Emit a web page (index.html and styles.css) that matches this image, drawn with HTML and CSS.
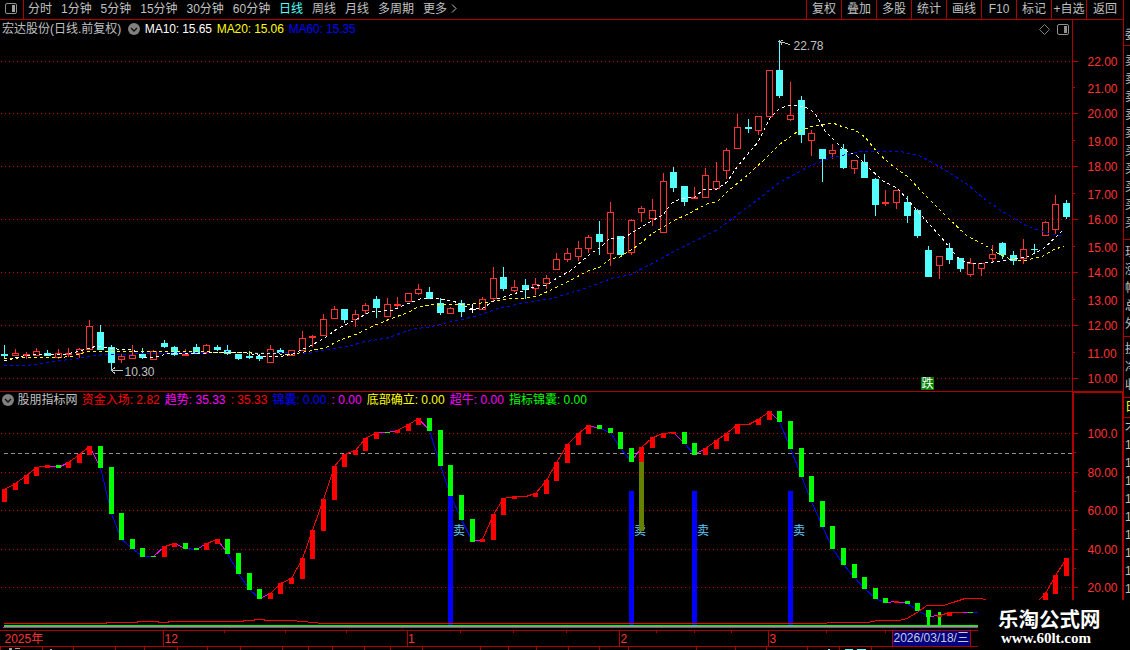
FILE: index.html
```html
<!DOCTYPE html>
<html lang="zh-CN">
  <head>
    <meta charset="UTF-8" />
    <meta name="viewport" content="width=device-width, initial-scale=1.0" />
    <title>宏达股份 日线</title>
    <link rel="stylesheet" href="styles.css">
  </head>
  <body>
    <div class="terminal">
      <header class="toolbar">
        <div class="toggle">
          <svg width="12" height="12" viewBox="0 0 12 12"><rect x="0.5" y="0.5" width="11" height="10" rx="1.5" fill="none" stroke="#909090" /><rect x="7" y="2" width="3" height="7" fill="#a0a0a0" /></svg>
        </div>
        <nav class="periods">
          <span>分时</span><span>1分钟</span><span>5分钟</span><span>15分钟</span><span>30分钟</span><span>60分钟</span><span class="active">日线</span><span>周线</span><span>月线</span><span>多周期</span><span>更多</span>
          <svg class="more" width="6" height="10" viewBox="0 0 6 10"><path d="M1 0.5L5 4.5L1 8.5" fill="none" stroke="#c0c0c0" /></svg>
        </nav>
        <nav class="tools">
          <span>复权</span><span>叠加</span><span>多股</span><span>统计</span><span>画线</span><span>F10</span><span>标记</span><span>+自选</span><span class="back">返回</span>
        </nav>
      </header>

      <section class="panel price">
        <svg id="price" class="chart" width="1124" height="371" viewBox="0 20 1124 371"></svg>
        <div class="caption">
          <span class="name">宏达股份(日线.前复权)</span>
          <svg class="drop" width="12" height="12" viewBox="0 0 12 12"><circle cx="6" cy="6" r="6" fill="#808080" /><path d="M3 5L6 8L9 5" fill="none" stroke="#111" stroke-width="1.4" /></svg>
          <span class="ma white">MA10: 15.65</span>
          <span class="ma yellow">MA20: 15.06</span>
          <span class="ma blue">MA60: 15.35</span>
          <div class="corner">
            <svg width="11" height="11" viewBox="0 0 11 11"><path d="M5.5 0.5L10.5 5.5L5.5 10.5L0.5 5.5Z" fill="none" stroke="#808080" /></svg>
            <svg width="12" height="11" viewBox="0 0 12 11"><rect x="0.5" y="0.5" width="11" height="10" rx="1.5" fill="none" stroke="#909090" /><rect x="7" y="2" width="3" height="7" fill="#909090" /></svg>
          </div>
        </div>
      </section>

      <section class="panel indicator">
        <svg id="indicator" class="chart" width="1124" height="238" viewBox="0 392 1124 238"></svg>
        <div class="caption">
          <svg class="drop" width="12" height="12" viewBox="0 0 12 12"><circle cx="6" cy="6" r="6" fill="#808080" /><path d="M3 5L6 8L9 5" fill="none" stroke="#111" stroke-width="1.4" /></svg>
          <span class="name">股朋指标网</span>
          <span class="red">资金入场: 2.82</span>
          <span class="magenta">趋势: 35.33</span>
          <span class="red">: 35.33</span>
          <span class="blue">锦囊: 0.00</span>
          <span class="magenta">: 0.00</span>
          <span class="yellow">底部确立: 0.00</span>
          <span class="magenta">超牛: 0.00</span>
          <span class="green">指标锦囊: 0.00</span>
        </div>
      </section>

      <svg id="timeline" class="chart" width="1124" height="20" viewBox="0 630 1124 20"></svg>
    </div>

    <aside class="side">
      <div class="cell head">委</div>
      <div class="cell quotes">卖卖卖卖卖买买买买买</div>
      <div class="cell quotes2">现涨幅总外</div>
      <div class="cell quotes3">换净收</div>
      <div class="cell tab yellow">日</div>
      <div class="cell ticks">才111111111</div>
    </aside>

    <div class="logo">
      <strong>乐淘公式网</strong>
      <b>www.60lt.com</b>
    </div>

    <script src="chart.js"></script>
  </body>
</html>
```
FILE: styles.css
```css
body {
  margin: 0;
  width: 1130px;
  height: 650px;
  overflow: hidden;
  display: flex;
  position: relative;
  background-color: #000;
  color: #c0c0c0;
  font-family: "Liberation Sans", "Noto Sans CJK SC", sans-serif;
  font-size: 12px;
  line-height: 18px;
}

svg {
  display: block;
  flex: none;
}

.terminal {
  width: 1124px;
  flex: none;
}

/* Top toolbar */
.toolbar {
  display: flex;
  box-sizing: border-box;
  height: 20px;
  border-right: 1px solid #b00000;
  border-bottom: 1px solid #b00000;
  white-space: nowrap;
}

.toggle {
  width: 18px;
  padding-left: 5px;
  padding-top: 3px;
  border-right: 1px solid #b00000;
}

.periods {
  display: flex;
  flex: 1;
  gap: 8.95px;
  padding-left: 4px;
}

.periods .active {
  color: #54ffff;
}

.more {
  margin: 4px 0 0 -5px;
}

.tools {
  display: flex;
}

.tools span {
  width: 34px;
  border-left: 1px solid #b00000;
  text-align: center;
}

.tools .back {
  width: 36px;
}

/* Panels */
.panel {
  display: grid;
}

.panel > * {
  grid-area: 1 / 1;
}

.price {
  height: 371px;
  border-bottom: 1px solid #b00000;
}

.indicator {
  height: 238px;
}

.caption {
  display: flex;
  align-items: center;
  align-self: start;
  gap: 5px;
  height: 18px;
  padding-left: 2px;
  white-space: nowrap;
}

.price .name {
  margin-right: 1.5px;
}

.ma {
  letter-spacing: -0.1px;
}

.indicator .caption {
  gap: 5.1px;
  height: 16px;
}

.indicator .name {
  margin: 0 -1px 0 -1.5px;
}

.corner {
  display: flex;
  gap: 7px;
  margin-left: auto;
  padding-right: 55px;
}

.white { color: #fff; }
.yellow { color: #ff0; }
.blue { color: #00f; }
.red { color: #f00; }
.magenta { color: #f0f; }
.green { color: #0f0; }

.chart text {
  font-size: 12px;
}

/* Clipped quote column */
.side {
  width: 6px;
  overflow: hidden;
}

.cell {
  box-sizing: border-box;
  width: 13px;
  padding-left: 1px;
  overflow: hidden;
  word-break: break-all;
  border-bottom: 1px solid #b00000;
}

.head {
  height: 46px;
  padding-top: 26px;
}

.quotes {
  height: 194px;
  padding-top: 6px;
}

.quotes2 {
  height: 97px;
  padding-top: 3px;
}

.quotes3 {
  height: 61px;
  padding-top: 3px;
}

.tab {
  height: 20px;
}

.ticks {
  height: 232px;
  border-bottom: none;
}

/* Site logo over the corner */
.logo {
  position: absolute;
  right: 0;
  bottom: 0;
  width: 132px;
  height: 45px;
  padding: 5px 0 0 20px;
  background-color: #000;
  color: #fff;
}

.logo strong {
  display: block;
  font: bold 20.5px/26px "Noto Sans CJK SC", sans-serif;
}

.logo b {
  display: block;
  padding-left: 3px;
  font: bold 15px/15px "Liberation Serif", serif;
}
```
FILE: chart.js
```js
const RED = "#ff3232";
const CYAN = "#54ffff";
const LINE = "#b00000";

// high, body top, body bottom, low, direction
const candles = [
  [345,354,356,358,"d"],[349,353,356,356,"u"],[352,354,356,359,"u"],[348,351,356,356,"u"],[350,353,356,356,"d"],
  [349,353,358,359,"u"],[348,353,355,357,"u"],[348,349,354,358,"u"],[320,326,350,350,"u"],[325,332,350,350,"d"],
  [345,347,363,371,"d"],[354,356,360,363,"u"],[345,355,359,359,"u"],[348,354,358,359,"d"],[350,351,360,360,"u"],
  [340,343,347,348,"d"],[346,347,355,356,"d"],[349,354,356,356,"u"],[344,347,354,354,"d"],[344,345,353,354,"u"],
  [345,347,350,351,"d"],[345,350,354,355,"d"],[354,354,359,360,"d"],[351,356,358,359,"d"],[354,356,359,361,"d"],
  [345,349,363,363,"u"],[348,350,353,353,"d"],[350,350,356,356,"u"],[331,338,351,351,"u"],[335,336,338,347,"u"],
  [314,319,336,336,"u"],[306,309,319,319,"u"],[309,309,320,323,"d"],[310,314,320,327,"u"],[303,305,311,314,"u"],
  [296,299,308,318,"d"],[298,304,317,317,"u"],[297,304,306,309,"u"],[293,293,302,302,"u"],[284,289,294,295,"u"],
  [287,292,299,299,"d"],[298,303,313,315,"d"],[307,308,314,314,"u"],[300,303,312,317,"d"],[304,309,310,313,"w"],
  [297,299,310,310,"u"],[267,278,299,302,"u"],[267,277,289,291,"d"],[280,287,291,292,"u"],[279,285,290,299,"d"],
  [278,284,289,295,"u"],[275,278,284,289,"u"],[253,259,270,270,"u"],[248,253,260,262,"u"],[241,248,257,261,"u"],
  [235,237,249,253,"u"],[221,234,242,255,"d"],[202,212,254,266,"u"],[236,236,255,255,"d"],[219,220,253,255,"u"],
  [206,208,213,222,"u"],[199,210,219,226,"u"],[173,181,233,233,"u"],[167,172,188,192,"d"],[186,186,202,206,"d"],
  [187,197,199,199,"u"],[168,175,198,198,"u"],[162,181,189,189,"u"],[148,150,171,179,"u"],[114,127,149,149,"u"],
  [119,127,129,133,"d"],[116,116,131,135,"u"],[70,70,117,117,"u"],[40,70,96,98,"d"],[82,115,120,121,"u"],
  [96,100,135,143,"d"],[130,133,141,156,"u"],[149,149,159,182,"d"],[144,150,154,159,"u"],[144,149,168,169,"d"],
  [160,160,169,174,"u"],[154,162,178,178,"d"],[178,179,205,216,"d"],[190,202,204,206,"u"],[190,190,203,209,"u"],
  [196,202,216,223,"d"],[209,210,236,238,"d"],[246,250,277,277,"d"],[256,256,266,279,"u"],[243,248,260,264,"d"],
  [258,258,269,272,"d"],[258,263,275,277,"u"],[263,263,269,276,"u"],[245,254,259,262,"u"],[242,243,255,259,"d"],
  [251,255,261,265,"d"],[239,249,259,264,"u"],[244,249,250,254,"d"],[221,222,236,236,"u"],[195,204,230,234,"u"],
  [200,203,217,219,"d"]
];

const ma10 = "4,361 23,356 43,354 67,354 80,351 97,346 117,349 133,350 143,357 155,357 167,354 183,353 207,353 227,352 247,353 263,356 283,356 293,354 310,346 323,339 337,329 353,321 370,312 393,310 407,304 420,299 433,298 453,301 470,308 483,308 497,299 507,296 523,291 537,286 547,285 557,278 570,271 582,261 590,254 600,248 610,238 622,239 635,231 650,222 663,215 672,203 680,199 695,197 703,190 717,189 727,182 737,167 747,155 758,142 770,118 780,108 792,105 805,107 815,113 825,131 843,149 857,156 867,166 883,181 897,188 908,200 920,214 940,236 960,260 973,264 993,262 1013,259 1027,257 1043,249 1057,236 1064,229";
const ma20 = "4,359 33,357 57,358 73,356 90,351 110,351 133,352 157,351 180,351 213,352 253,353 280,354 293,354 310,351 327,347 340,340 357,334 373,326 390,319 407,313 418,307 437,304 473,304 490,302 507,299 527,298 540,295 553,289 573,279 588,271 600,267 610,259 620,257 637,246 653,233 673,221 690,213 707,204 717,202 727,192 750,173 767,157 780,144 797,132 813,126 833,123 843,127 855,130 865,137 877,152 890,164 907,176 923,193 947,217 967,236 983,244 997,253 1010,259 1023,261 1043,256 1053,250 1064,246";
const ma60 = "4,366 30,365 50,362 80,358 100,355 133,354 167,353 227,352 290,353 310,353 330,349 350,346 363,342 387,338 413,329 430,327 450,322 473,317 497,309 523,303 550,299 570,293 583,289 613,278 630,275 653,263 673,252 693,242 717,230 740,213 760,198 780,182 799,172 810,166 833,157 850,154 863,151 903,152 920,156 940,167 967,184 983,198 1003,212 1027,226 1043,232 1063,236";

// top, bottom, direction of the trend bars
const bars = [
  [489,502,1],[483,490,1],[475,484,1],[467,476,1],[465,468,1],[465,468,0],[462,468,1],[454,463,1],[446,455,1],[446,468,0],
  [467,514,0],[513,540,0],[539,549,0],[548,557,0],[556,557,0],[546,557,1],[543,547,1],[543,549,0],[548,550,0],[543,550,1],
  [539,544,1],[539,554,0],[553,574,0],[573,590,0],[589,599,0],[593,599,1],[583,594,1],[578,584,1],[558,579,1],[530,559,1],
  [499,531,1],[466,500,1],[454,467,1],[450,455,1],[438,451,1],[432,439,1],[432,433,0],[430,433,1],[424,431,1],[418,425,1],
  [418,431,0],[430,466,0],[465,496,0],[495,520,0],[519,542,0],[539,542,1],[514,540,1],[498,515,1],[496,499,1],[496,497,1],
  [493,497,1],[480,494,1],[462,481,1],[444,463,1],[433,445,1],[425,434,1],[425,429,0],[428,433,0],[432,449,0],[448,462,0],
  [447,462,1],[437,448,1],[433,438,1],[432,434,1],[432,444,0],[443,455,0],[448,455,1],[440,449,1],[433,441,1],[424,434,1],
  [424,425,1],[419,425,1],[411,420,1],[411,422,0],[421,449,0],[448,477,0],[476,502,0],[501,527,0],[526,549,0],[548,565,0],
  [564,578,0],[577,589,0],[588,599,0],[598,603,0],[601,603,1],[601,604,0],[603,611,0],[610,617,0],[615,617,1],[612,616,1],
  [612,613,1],[612,613,0],[612,613,0],[612,613,1],[612,613,0],[612,613,1],[612,613,1],[604,613,1],[593,605,1],[575,594,1],
  [558,576,1]
];

function xAt(i) {
  return Math.floor(4.95 + i * 10.615);
}

function rect(x, y, w, h, color) {
  return `<rect x="${x}" y="${y}" width="${w}" height="${h}" fill="${color}"/>`;
}

function text(x, y, str, color) {
  return `<text x="${x}" y="${y}" fill="${color}">${str}</text>`;
}

function line(x1, y1, x2, y2, color, dash) {
  return `<line x1="${x1}" y1="${y1}" x2="${x2}" y2="${y2}" stroke="${color}" stroke-dasharray="${dash || "none"}" shape-rendering="crispEdges"/>`;
}

function poly(points, color, dash) {
  return `<polyline points="${points}" fill="none" stroke="${color}" stroke-dasharray="${dash || "none"}" shape-rendering="crispEdges"/>`;
}

function drawPrice() {
  let out = "";
  [61, 113, 166, 219, 272, 325, 378].forEach((y) => {
    out += line(1, y + 0.5, 1072, y + 0.5, LINE, "1 3");
    out += rect(1073, y, 5, 1, LINE);
  });
  [87, 140, 193, 246, 299, 352].forEach((y) => {
    out += rect(1073, y, 2, 1, LINE);
  });
  out += rect(1072, 20, 1, 371, LINE) + rect(1123, 20, 1, 371, LINE);
  for (let v = 22, n = 0; v >= 10; v--, n++) {
    const y = [66, 93, 118, 146, 171, 199, 224, 252, 277, 305, 330, 358, 383][n];
    out += text(1087.5, y, v + ".00", RED);
  }

  candles.forEach(([high, top, bottom, low, dir], i) => {
    const x = xAt(i);
    const h = bottom - top;
    if (dir === "u") {
      out += rect(x, high, 1, top - high, RED) + rect(x, bottom, 1, low - bottom, RED);
      if (h < 3) {
        out += rect(x - 3, top, 7, h, RED);
      } else {
        out += `<rect x="${x - 2.5}" y="${top + 0.5}" width="6" height="${h - 1}" fill="none" stroke="${RED}"/>`;
      }
    } else {
      const color = dir === "w" ? "#fff" : CYAN;
      out += rect(x, high, 1, low - high, color) + rect(x - 3, top, 7, h, color);
    }
  });

  out += poly(ma60, "#0000ff", "3 3") + poly(ma20, "#ffff00", "3 3") + poly(ma10, "#ffffff", "3 3");

  out += poly("790,44.5 779.5,41.5 783,40.5", "#c0c0c0") + poly("779.5,41.5 782,44.5", "#c0c0c0") + text(793.5, 50, "22.78", "#c0c0c0");
  out += poly("123,370.5 111.5,370.5 115,367.5", "#c0c0c0") + poly("111.5,370.5 115,373.5", "#c0c0c0") + text(124.5, 376, "10.30", "#c0c0c0");
  out += rect(921, 377, 13, 13, "#008000") + text(921.5, 388, "跌", "#fff");
  document.getElementById("price").innerHTML = out;
}

function drawIndicator() {
  let out = "";
  [433, 472, 510, 549, 587].forEach((y, n) => {
    out += line(1, y + 0.5, 1072, y + 0.5, LINE, "1 3");
    out += rect(1074, y, 4, 1, LINE) + rect(1074, y + 19, 2, 1, LINE);
    out += text(1087.5, y + 5, ["100.0", "80.00", "60.00", "40.00", "20.00"][n], RED);
  });
  out += line(4, 453.5, 1072, 453.5, "#909090", "4 3");
  out += rect(1072, 392, 2, 238, LINE) + rect(1122, 392, 2, 238, LINE) + rect(1072, 392, 52, 1, LINE);

  // sell signals
  [453, 634, 697, 793].forEach((x) => {
    out += text(x, 535, "卖", "#60c8ff");
  });
  [[42, 496], [59, 491], [65, 491], [74, 491]].forEach(([i, y]) => {
    out += rect(xAt(i) - 2, y, 5, 625 - y, "#0000ff");
  });
  out += rect(xAt(60) - 2, 462, 5, 69, "#668000");

  const close = (b) => (b[2] ? b[0] : b[1] - 1) + 0.5;
  for (let i = 1; i < bars.length; i++) {
    const a = bars[i - 1];
    const b = bars[i];
    const color = a[2] !== b[2] ? "#ff00ff" : b[2] ? "#ff0000" : "#0000ff";
    out += line(xAt(i - 1) + 0.5, close(a), xAt(i) + 0.5, close(b), color);
  }
  bars.forEach(([top, bottom, up], i) => {
    out += rect(xAt(i) - 2, top, 5, bottom - top, up ? "#ff0000" : "#00ff00");
  });
  out += rect(927, 612, 3, 13, "#00ff00") + rect(938, 612, 3, 13, "#00ff00") + rect(937, 615, 5, 2, "#ff0000");

  out += poly("4,623.5 106,623.5 107,622.5 137,622.5 138,621.5 158,621.5 159,622.5 168,622.5 169,621.5 243,621.5 244,620.5 254,620.5 255,619.5 264,619.5 265,620.5 296,620.5 298,621.5 307,621.5 309,622.5 317,622.5 319,623.5 826,623.5 828,622.5 869,622.5 871,621.5 880,620.5 899,620.5 907,618.5 917,612.5 927,605.5 943,605.5 953,602.5 965,598.5 982,598.5 986,600", "#ff0000");
  out += rect(4, 625, 1068, 2, "#00ff00") + rect(3, 627, 1069, 1, "#ff00ff");
  document.getElementById("indicator").innerHTML = out;
}

function drawTimeline() {
  let out = rect(0, 630, 1124, 1, LINE) + rect(0, 646, 1124, 1, LINE);
  [163, 407, 619, 768, 892].forEach((x) => {
    out += rect(x, 630, 1, 16, LINE);
  });
  [224, 285, 346, 460, 513, 566, 656, 694, 731, 826, 885].forEach((x) => {
    out += rect(x, 631, 1, 2, LINE);
  });
  [0, 42, 73, 115, 144, 177, 207, 240, 282, 308, 332, 364, 390, 422, 480, 508, 536, 568, 599, 628, 696, 735, 766, 807, 839, 871].forEach((x) => {
    out += rect(x, 647, 1, 3, LINE);
  });
  out += text(4.5, 643, "2025年", RED) + text(164.5, 643, "12", RED) + text(408, 643, "1", RED) + text(620.5, 643, "2", RED) + text(769.5, 643, "3", RED);
  out += rect(893, 631, 77, 15, "#000080") + rect(970, 631, 1, 15, LINE) + text(893.5, 642, "2026/03/18/三", "#c8c8d8");
  // tops of the next row of labels
  out += rect(9, 648, 3, 2, "#a0a0a0") + rect(15, 648, 5, 1, "#a0a0a0") + rect(50, 649, 2, 1, "#a0a0a0");
  out += rect(828, 649, 2, 1, CYAN) + rect(845, 649, 8, 1, CYAN) + rect(857, 649, 9, 1, CYAN);
  document.getElementById("timeline").innerHTML = out;
}

drawPrice();
drawIndicator();
drawTimeline();
```
